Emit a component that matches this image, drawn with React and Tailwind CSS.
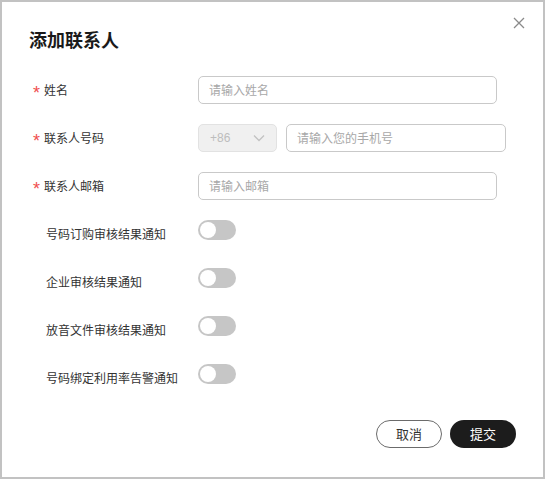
import React from 'react';

const FONT = { fontFamily: '"Noto Sans CJK SC", "Noto Sans", sans-serif' };

const TextInput = ({ placeholder, className = 'w-[299px]' }) => (
  <div className={`flex items-center h-[28px] px-[10px] border border-[#c9c9c9] rounded-[5px] bg-white ${className}`}>
    <span className="text-[12px] leading-none text-[#a8a8a8]">{placeholder}</span>
  </div>
);

const Toggle = () => (
  <div className="relative w-[38px] h-[20px] rounded-full bg-[#c6c6c6] self-start">
    <div className="absolute left-[2px] top-[2px] w-[16px] h-[16px] rounded-full bg-white" />
  </div>
);

const RequiredLabel = ({ children }) => (
  <div className="flex items-center w-[165px] shrink-0">
    <span className="w-[11px] text-[18px] leading-none text-[#f04f4f] pt-[6px]" style={{ fontFamily: '"Liberation Sans", sans-serif' }}>*</span>
    <span className="text-[12px] text-[#333]">{children}</span>
  </div>
);

const notifications = ['号码订购审核结果通知', '企业审核结果通知', '放音文件审核结果通知', '号码绑定利用率告警通知'];

export default function App() {
  return (
    <div className="relative w-[545px] h-[479px] border-2 border-[#c2c2c2] bg-white" style={FONT}>
      {/* close */}
      <button className="absolute right-[18px] top-[15px] w-[12px] h-[12px] text-[#8a8a8a]">
        <svg viewBox="0 0 12 12" width="12" height="12" fill="none" stroke="currentColor" strokeWidth="1.3">
          <path d="M1 1 L11 11 M11 1 L1 11" />
        </svg>
      </button>

      <h2 className="mt-[25px] pl-[27px] text-[18px] leading-[24px] font-bold text-[#1a1a1a]">添加联系人</h2>

      <div className="mt-[25px] pl-[31px] flex flex-col gap-[20px]">
        <div className="flex items-center h-[28px]">
          <RequiredLabel>姓名</RequiredLabel>
          <TextInput placeholder="请输入姓名" />
        </div>

        <div className="flex items-center h-[28px]">
          <RequiredLabel>联系人号码</RequiredLabel>
          <div className="flex items-center gap-[9px]">
            <div className="flex items-center justify-between w-[79px] h-[28px] pl-[11px] pr-[11px] border border-[#e2e2e2] rounded-[5px] bg-[#f0f0f0]">
              <span className="text-[12px] leading-none text-[#bdbdbd]" style={{ fontFamily: '"Liberation Sans", sans-serif' }}>+86</span>
              <svg viewBox="0 0 12 8" width="12" height="8" fill="none" stroke="#c2c2c2" strokeWidth="1.3">
                <path d="M1 1.5 L6 6.5 L11 1.5" />
              </svg>
            </div>
            <TextInput placeholder="请输入您的手机号" className="w-[220px]" />
          </div>
        </div>

        <div className="flex items-center h-[28px]">
          <RequiredLabel>联系人邮箱</RequiredLabel>
          <TextInput placeholder="请输入邮箱" />
        </div>

        {notifications.map((label) => (
          <div key={label} className="flex items-center h-[28px]">
            <div className="w-[165px] shrink-0 pl-[13px] text-[12px] text-[#333]">{label}</div>
            <Toggle />
          </div>
        ))}
      </div>

      <div className="mt-[28px] pr-[27px] flex justify-end gap-[8px]">
        <button className="w-[66px] h-[28px] rounded-full border border-[#6b6b6b] bg-white text-[13px] text-[#333]">取消</button>
        <button className="w-[66px] h-[28px] rounded-full bg-[#1c1c1c] text-[13px] text-white">提交</button>
      </div>
    </div>
  );
}
